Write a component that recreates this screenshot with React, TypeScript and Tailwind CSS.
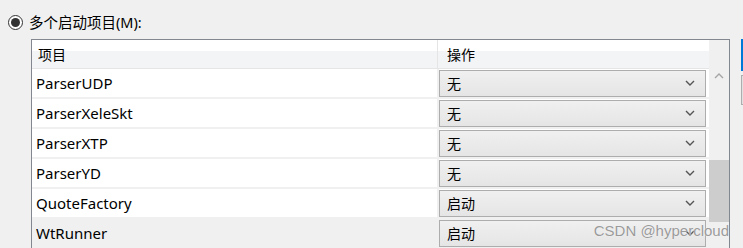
const rows = [
  { name: "ParserUDP", action: "无" },
  { name: "ParserXeleSkt", action: "无" },
  { name: "ParserXTP", action: "无" },
  { name: "ParserYD", action: "无" },
  { name: "QuoteFactory", action: "启动" },
  { name: "WtRunner", action: "启动", selected: true },
];

function Chevron({ up = false, className = "" }: { up?: boolean; className?: string }) {
  return (
    <svg width="10" height="6" viewBox="0 0 10 6" className={className}>
      <path
        d={up ? "M1 5 L5 1 L9 5" : "M1 1 L5 5 L9 1"}
        fill="none"
        stroke="currentColor"
        strokeWidth="1.4"
      />
    </svg>
  );
}

export default function App() {
  return (
    <div
      className="relative h-[248px] w-[743px] overflow-hidden bg-[#f0f0f0] text-[14px] text-black"
      style={{ fontFamily: '"Noto Sans", "Noto Sans CJK SC", sans-serif' }}
    >
      {/* radio option */}
      <div className="flex h-[30px] items-center pl-[8px] pt-[14px]">
        <span className="flex h-[15px] w-[15px] items-center justify-center rounded-full border border-[#333] bg-white">
          <span className="h-[9px] w-[9px] rounded-full bg-[#333]" />
        </span>
        <span className="ml-[6px] text-[14.5px] leading-none">多个启动项目(M):</span>
      </div>

      <div className="mt-[9px] flex">
        {/* list frame */}
        <div className="ml-[31px] flex h-[220px] w-[699px] border-x border-t border-[#828790]">
          <div className="flex w-[677px] flex-col bg-white">
            <div className="flex h-[29px] shrink-0 border-b border-[#e5e5e5] bg-gradient-to-b from-white from-40% to-[#f3f4f6] to-40%">
              <div className="flex w-[406px] items-center border-r border-[#e5e5e5] pl-[6px]">项目</div>
              <div className="flex flex-1 items-center pl-[9px]">操作</div>
            </div>
            {rows.map((r) => (
              <div
                key={r.name}
                className={`flex h-[30px] shrink-0 border-b-2 border-[#f0f0f0] ${r.selected ? "bg-[#f0f0f0]" : "bg-white"}`}
              >
                <div className="flex w-[405px] items-center pl-[4px] text-[15px]">{r.name}</div>
                <div className="flex flex-1 items-center border-l-2 border-[#f0f0f0] pr-[3px]">
                  <div className="flex h-[27px] flex-1 items-center justify-between border border-[#adadad] bg-gradient-to-b from-[#f0f0f0] to-[#e5e5e5] pl-[7px] pr-[10px]">
                    <span>{r.action}</span>
                    <Chevron className="text-[#555]" />
                  </div>
                </div>
              </div>
            ))}
          </div>
          {/* scrollbar */}
          <div className="relative w-[20px] bg-[#f0f0f0]">
            <div className="flex h-[40px] items-end justify-center pb-[1px] text-[#a6a6a6]">
              <Chevron up />
            </div>
            <div className="mt-[80px] h-[62px] bg-[#cdcdcd]" />
          </div>
        </div>

        {/* buttons at right edge */}
        <div className="ml-[11px] flex flex-col gap-[4px]">
          <div className="h-[32px] w-[20px] bg-[#0078d7]" />
          <div className="h-[30px] w-[20px] border border-[#adadad] bg-[#e1e1e1]" />
        </div>
      </div>

      <div
        className="absolute right-[14px] top-[220px] text-[15px] text-[#9a9a9a]"
        style={{ fontFamily: '"Liberation Sans", sans-serif', textShadow: "0 0 1px #fff" }}
      >
        CSDN @hypercloud
      </div>
    </div>
  );
}
